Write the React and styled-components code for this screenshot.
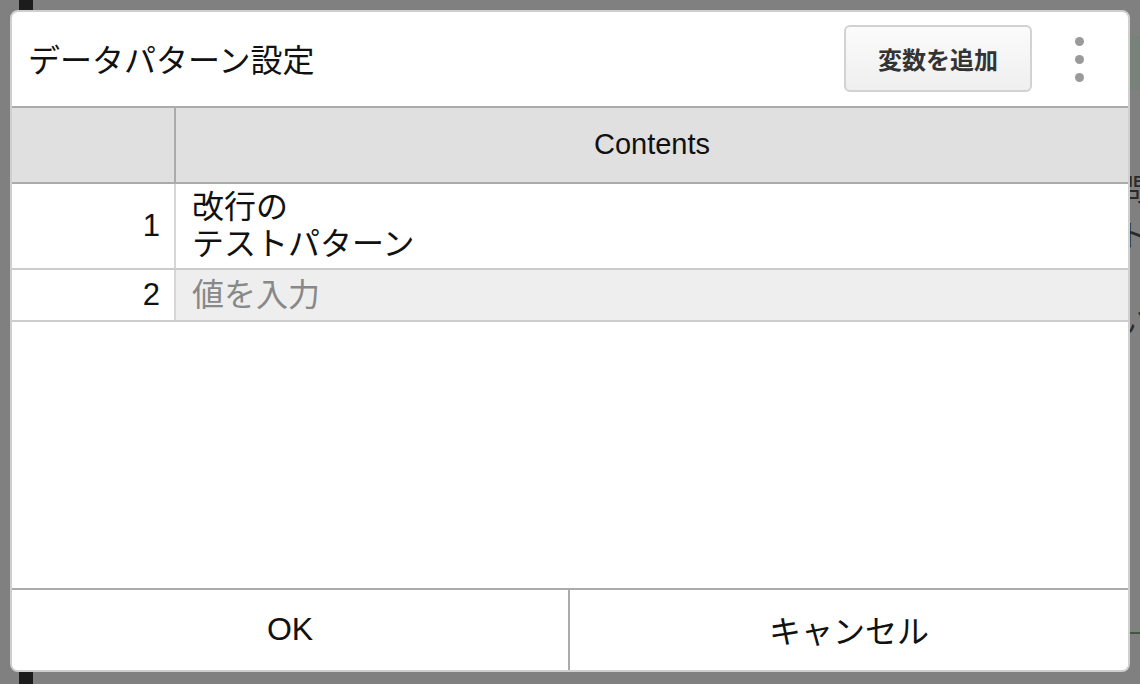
import React from 'react';
import styled, { createGlobalStyle } from 'styled-components';

const GlobalStyle = createGlobalStyle`
  html, body {
    margin: 0;
    padding: 0;
  }
  body {
    font-family: "Liberation Sans", "Noto Sans CJK JP", sans-serif;
    color: #111;
  }
`;

const Backdrop = styled.div`
  position: relative;
  width: 1140px;
  height: 684px;
  box-sizing: border-box;
  padding: 10px 10px 12px 10px;
  background: #808080;
  overflow: hidden;
`;

const BehindBar = styled.div`
  position: absolute;
  left: 19px;
  top: 0;
  width: 14px;
  height: 100%;
  background: #1c1c1c;
`;

const BehindBand = styled.div`
  position: absolute;
  right: 0;
  top: ${(p) => p.top}px;
  width: 20px;
  height: ${(p) => p.h}px;
  background: ${(p) => p.color};
`;

const BehindText = styled.div`
  position: absolute;
  left: 1118px;
  top: ${(p) => p.top}px;
  font-size: 30px;
  line-height: 32px;
  color: #2a2a2a;
`;

const Dialog = styled.div`
  position: relative;
  width: 1120px;
  height: 662px;
  box-sizing: border-box;
  border: 2px solid #cfcfcf;
  border-radius: 8px;
  background: #fff;
  display: flex;
  flex-direction: column;
  overflow: hidden;
`;

const TitleBar = styled.div`
  height: 94px;
  flex: none;
  display: flex;
  align-items: center;
  padding: 0 44px 0 16px;
  border-bottom: 2px solid #ababab;
`;

const Title = styled.div`
  flex: 1;
  font-size: 32px;
  color: #111;
  padding-bottom: 2px;
`;

const AddButton = styled.button`
  width: 188px;
  height: 67px;
  margin-top: -1px;
  border: 2px solid #d2d2d2;
  border-radius: 6px;
  background: linear-gradient(#fbfbfb, #efefef);
  font-family: inherit;
  font-size: 24px;
  font-weight: bold;
  color: #333;
  cursor: pointer;
`;

const Kebab = styled.div`
  width: 10px;
  margin-left: 42px;
  display: flex;
  flex-direction: column;
  align-items: center;
  gap: 9px;
`;

const Dot = styled.span`
  width: 9px;
  height: 9px;
  border-radius: 50%;
  background: #9a9a9a;
`;

const Row = styled.div`
  display: grid;
  grid-template-columns: 164px 1fr;
  height: ${(p) => p.h}px;
  flex: none;
  border-bottom: 2px solid ${(p) => (p.head ? '#ababab' : '#cccccc')};
  background: ${(p) => (p.head ? '#e0e0e0' : '#fff')};
`;

const NumCell = styled.div`
  border-right: 2px solid ${(p) => (p.head ? '#ababab' : '#d6d6d6')};
  display: flex;
  align-items: center;
  justify-content: flex-end;
  padding-right: 14px;
  font-size: 31px;
`;

const HeadCell = styled.div`
  display: flex;
  align-items: center;
  justify-content: center;
  font-size: 29px;
  padding-bottom: 2px;
`;

const ValueCell = styled.div`
  display: flex;
  align-items: center;
  padding-left: 16px;
  font-size: 32px;
  line-height: 37px;
  white-space: pre-line;
  background: ${(p) => (p.empty ? '#eeeeee' : '#fff')};
  color: ${(p) => (p.empty ? '#888' : '#111')};
`;

const Spacer = styled.div`
  flex: 1;
`;

const Footer = styled.div`
  height: 80px;
  flex: none;
  display: grid;
  grid-template-columns: 556px 1fr;
  border-top: 2px solid #ababab;
`;

const FooterButton = styled.button`
  border: none;
  border-left: ${(p) => (p.divider ? '2px solid #ababab' : 'none')};
  background: #fff;
  font-family: inherit;
  font-size: 32px;
  color: #111;
  cursor: pointer;
  padding: 0 0 2px 0;
`;

const rows = [
  { id: 1, value: '改行の\nテストパターン' },
  { id: 2, value: '' },
];

export default function App() {
  return (
    <>
      <GlobalStyle />
      <Backdrop>
        <BehindBar />
        <BehindBand top={36} h={54} color="#78817a" />
        <BehindBand top={632} h={2} color="#3f5a40" />
        <BehindText top={174}>問</BehindText>
        <BehindText top={220}>ト</BehindText>
        <BehindText top={306}>い</BehindText>
        <Dialog>
          <TitleBar>
            <Title>データパターン設定</Title>
            <AddButton>変数を追加</AddButton>
            <Kebab>
              <Dot />
              <Dot />
              <Dot />
            </Kebab>
          </TitleBar>
          <Row head h={74}>
            <NumCell head />
            <HeadCell>Contents</HeadCell>
          </Row>
          {rows.map((r) => (
            <Row key={r.id} h={r.value ? 84 : 50}>
              <NumCell>{r.id}</NumCell>
              <ValueCell empty={!r.value}>{r.value || '値を入力'}</ValueCell>
            </Row>
          ))}
          <Spacer />
          <Footer>
            <FooterButton>OK</FooterButton>
            <FooterButton divider>キャンセル</FooterButton>
          </Footer>
        </Dialog>
      </Backdrop>
    </>
  );
}
